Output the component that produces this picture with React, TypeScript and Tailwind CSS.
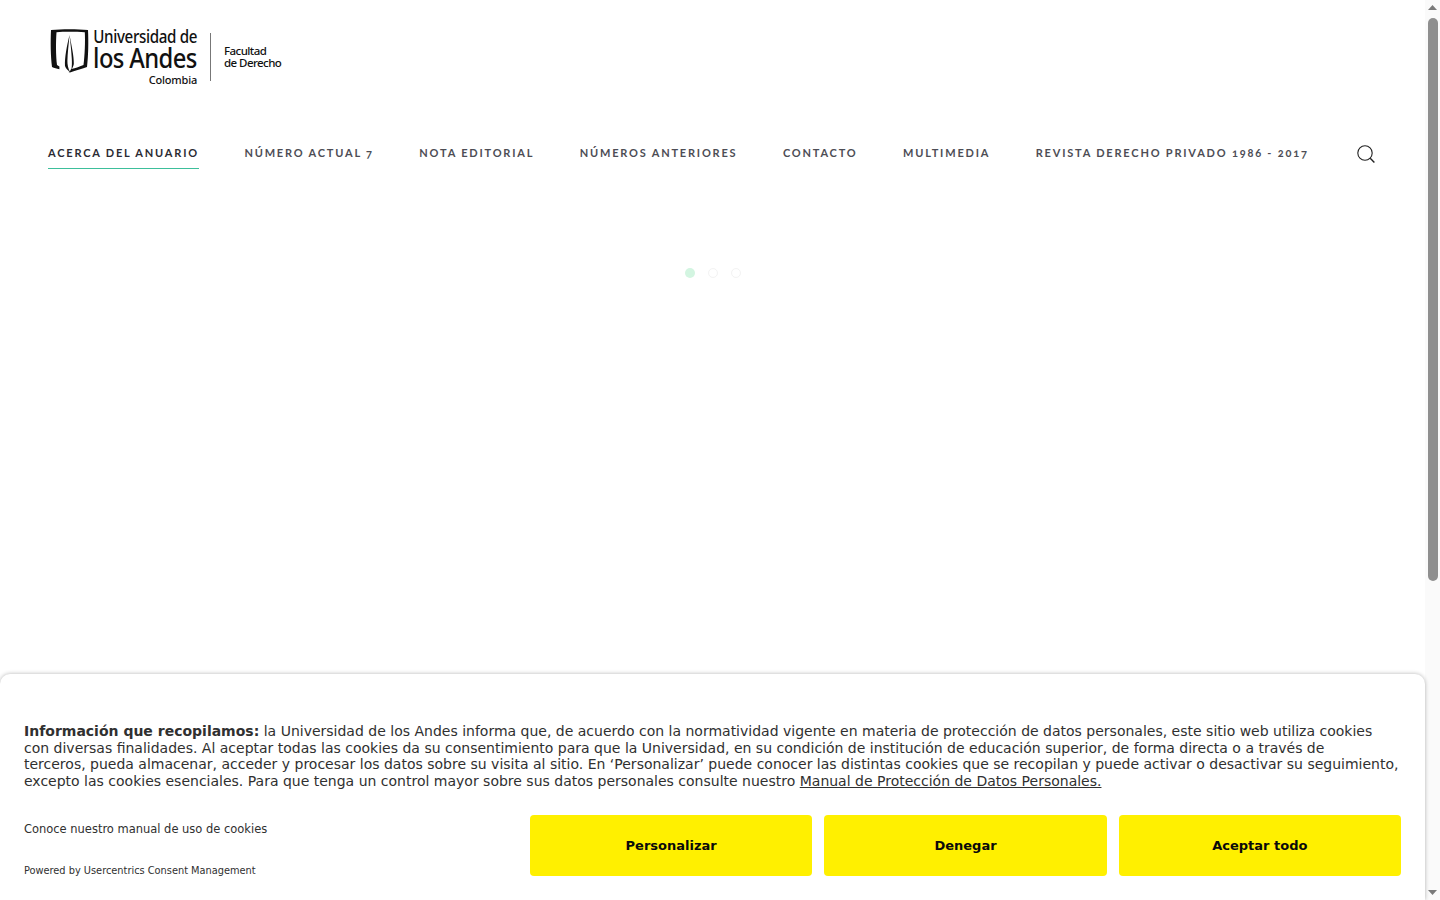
const navItems = [
  "ACERCA DEL ANUARIO",
  "NÚMERO ACTUAL 7",
  "NOTA EDITORIAL",
  "NÚMEROS ANTERIORES",
  "CONTACTO",
  "MULTIMEDIA",
  "REVISTA DERECHO PRIVADO 1986 - 2017",
];

function LogoMark() {
  return (
    <svg width="40" height="46" viewBox="0 0 40 46" fill="none" className="shrink-0">
      <path
        d="M1 2 C12 1 27 1 38 2 C38.6 14 38.4 28 37 39 C31 41 26 42.5 20 44.5 L18.5 44 C20 43.2 20.6 42.4 21 41 C26 40 30 38.5 33.5 37 C34.8 27 35.3 14 34.8 4.2 C25 3.6 14 3.6 6.5 4.2 C5.8 14 5.8 27 7 37 C7.8 37.6 8.6 38 9.4 38.4 L9.4 41.2 C6.5 40.6 4.4 40 2 39 C0.6 28 0.4 14 1 2 Z"
        fill="#111"
      />
      <path d="M19.5 7 C17 17 14.5 30 15 38 C16 41 18 42.5 20 44 C18 40 17.4 37 17.4 33 C17.6 25 18.6 17 19.5 7 Z" fill="#111" />
      <path d="M19.5 7 C21.6 18 24 28 23.8 36 C23.4 38 22.6 40 21.4 41.4 C22 38 22 35 21.8 31 C21.4 24 20.6 16 19.5 7 Z" fill="#111" />
    </svg>
  );
}

function Logo() {
  return (
    <div className="flex h-[60px] items-start font-['Noto_Sans',sans-serif] font-medium text-[#111]">
      <div className="mt-[1px]">
        <LogoMark />
      </div>
      <div className="ml-[3px] flex w-[104px] flex-col items-end">
        <span className="h-[18px] origin-right scale-x-[0.865] text-[17.5px] leading-[18px] tracking-[-0.4px] whitespace-nowrap">
          Universidad de
        </span>
        <span className="h-[25px] origin-right scale-x-[0.88] text-[27px] leading-[25px] tracking-[-0.7px] whitespace-nowrap">
          los Andes
        </span>
        <span className="mt-[3px] text-[11px] leading-[13px] tracking-[-0.2px]">Colombia</span>
      </div>
      <div className="mt-[6px] ml-[13px] h-[48px] w-px bg-[#777]" />
      <div className="mt-[18px] ml-[13px] flex flex-col text-[11.5px] leading-[12px] tracking-[-0.55px] whitespace-nowrap">
        <span>Facultad</span>
        <span>de Derecho</span>
      </div>
    </div>
  );
}

function SearchIcon() {
  return (
    <svg width="18" height="18" viewBox="0 0 18 18" fill="none" stroke="#222" strokeWidth="1.1">
      <circle cx="8" cy="8" r="7.2" />
      <path d="M13.2 13.2 L17.4 17.4" strokeWidth="1.4" />
    </svg>
  );
}

function Header() {
  return (
    <header className="px-[48px]">
      <div className="pt-[27px] pl-[2px]">
        <Logo />
      </div>
      <nav className="mt-[50px] flex items-start font-['Lato',sans-serif] text-[11px] font-bold tracking-[1.8px] whitespace-nowrap text-[#4d4d55] oldstyle-nums">
        <div className="flex gap-[45.5px]">
          {navItems.map((item, i) => (
            <a
              key={item}
              className={
                i === 0
                  ? "h-[32px] border-b border-[#3dbf9b] pt-[9px] leading-[14px] text-[#2b2b33]"
                  : "h-[32px] pt-[9px] leading-[14px]"
              }
            >
              {item}
            </a>
          ))}
        </div>
        <div className="mt-[8px] ml-[48.5px]">
          <SearchIcon />
        </div>
      </nav>
    </header>
  );
}

function Loader() {
  return (
    <div className="mt-[99px] flex justify-center gap-[13px] pl-[1px]">
      <span className="h-[10px] w-[10px] rounded-full bg-[#d3f5e1]" />
      <span className="h-[10px] w-[10px] rounded-full border border-[#f3f3f3]" />
      <span className="h-[10px] w-[10px] rounded-full border border-[#f3f3f3]" />
    </div>
  );
}

function Scrollbar() {
  return (
    <aside className="flex h-full w-[15px] shrink-0 flex-col items-center bg-[#fafafa]">
      <svg width="15" height="17" viewBox="0 0 15 17" className="shrink-0">
        <path d="M7.5 5 L12 10 L3 10 Z" fill="#7a7a7a" />
      </svg>
      <div className="mt-[1px] h-[563px] w-[10px] rounded-full bg-[#8f8f8f]" />
      <div className="flex-1" />
      <svg width="15" height="17" viewBox="0 0 15 17" className="shrink-0">
        <path d="M7.5 12 L12 7 L3 7 Z" fill="#7a7a7a" />
      </svg>
    </aside>
  );
}

function ConsentButton({ label }: { label: string }) {
  return (
    <button className="h-[61px] flex-1 rounded-[4px] bg-[#fff000] text-[13px] font-bold text-[#0a0a0a]">
      {label}
    </button>
  );
}

function ConsentBanner() {
  return (
    <div className="absolute right-[15px] bottom-0 left-0 h-[226px] rounded-t-[10px] bg-white px-[24px] pt-[49px] font-['DejaVu_Sans',sans-serif] text-[#303030] shadow-[0_0_4px_rgba(0,0,0,0.3)]">
      <p className="text-[14px] leading-[16.5px]">
        <strong className="font-bold">Información que recopilamos:</strong> la Universidad de los Andes informa que, de
        acuerdo con la normatividad vigente en materia de protección de datos personales, este sitio web utiliza cookies
        <br />
        con diversas finalidades. Al aceptar todas las cookies da su consentimiento para que la Universidad, en su
        condición de institución de educación superior, de forma directa o a través de
        <br />
        terceros, pueda almacenar, acceder y procesar los datos sobre su visita al sitio. En ‘Personalizar’ puede conocer
        las distintas cookies que se recopilan y puede activar o desactivar su seguimiento,
        <br />
        excepto las cookies esenciales. Para que tenga un control mayor sobre sus datos personales consulte nuestro{" "}
        <a className="underline">Manual de Protección de Datos Personales.</a>
      </p>
      <div className="mt-[26px] flex items-start justify-between">
        <div className="flex flex-col pt-[7px] font-['DejaVu_Sans_Condensed','DejaVu_Sans',sans-serif]">
          <a className="text-[12.75px] leading-[14px]">Conoce nuestro manual de uso de cookies</a>
          <span className="mt-[29px] text-[10.9px] leading-[12px]">Powered by Usercentrics Consent Management</span>
        </div>
        <div className="flex w-[871px] gap-[12px]">
          <ConsentButton label="Personalizar" />
          <ConsentButton label="Denegar" />
          <ConsentButton label="Aceptar todo" />
        </div>
      </div>
    </div>
  );
}

export default function App() {
  return (
    <div className="relative flex h-screen w-full overflow-hidden bg-white">
      <main className="min-w-0 flex-1">
        <Header />
        <Loader />
      </main>
      <Scrollbar />
      <ConsentBanner />
    </div>
  );
}
